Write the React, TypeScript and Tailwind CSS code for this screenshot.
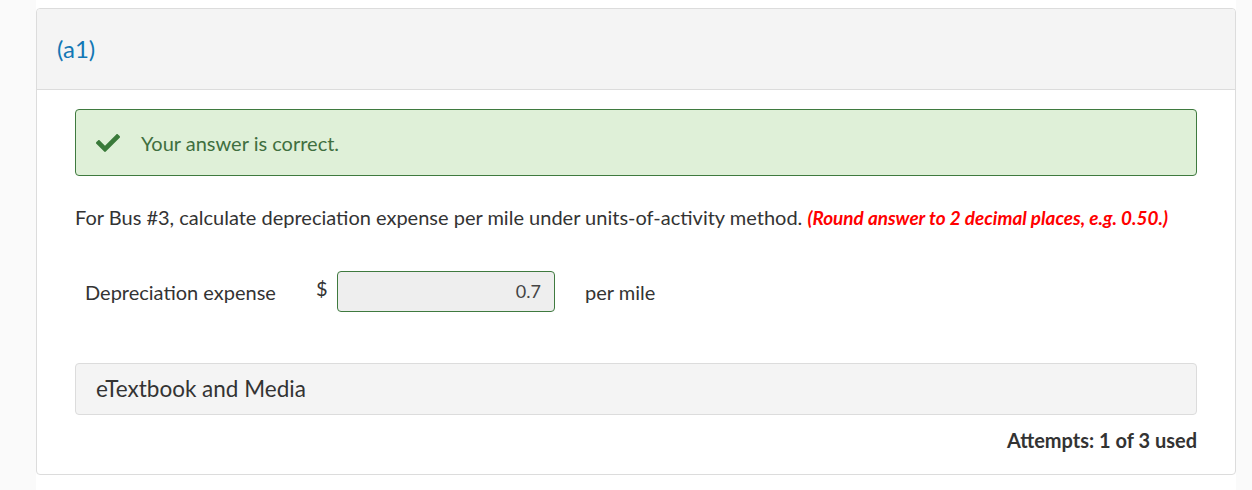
import React from "react";
import { FaCheck } from "react-icons/fa";

export default function App(): React.JSX.Element {
  return (
    <div className="min-h-[490px] bg-[#fafafa]" style={{ fontFamily: "Lato, 'Open Sans', sans-serif" }}>
      <div className="ml-[36px] w-[1200px] bg-white pt-2 pb-4">
        <div className="rounded border border-[#dcdcdc] bg-white">
          <div className="h-[81px] rounded-t border-b border-[#dcdcdc] bg-[#f4f4f4] px-5 pt-[24px]">
            <span className="text-[24px] leading-8 text-[#1277b5]">(a1)</span>
          </div>
          <div className="px-[38px] pt-[19px] pb-[20px]">
            <div className="flex h-[67px] items-center rounded border border-[#3f7a3f] bg-[#dff0d8] px-5">
              <FaCheck className="h-6 w-6 text-[#3a7a3a]" />
              <span className="ml-[21px] text-[20px] text-[#3f6f3f]">Your answer is correct.</span>
            </div>
            <p className="mt-[27px] text-[20px] leading-[28px] text-[#333]">
              For Bus #3, calculate depreciation expense per mile under units-of-activity method.{" "}
              <span className="text-[18.9px] font-bold italic text-[#f00]">(Round answer to 2 decimal places, e.g. 0.50.)</span>
            </p>
            <div className="mt-[39px] flex items-center pl-[10px]">
              <span className="w-[231px] text-[20px] text-[#333]">Depreciation expense</span>
              <span className="-mt-2 w-[21px] text-[20px] text-[#333]">$</span>
              <div className="flex h-[41px] w-[218px] items-center justify-end rounded-sm border border-[#3f7a3f] bg-[#eeeeee] px-[13px] text-[18px] text-[#444]">
                0.7
              </div>
              <span className="ml-[30px] text-[20px] text-[#333]">per mile</span>
            </div>
            <div className="mt-[51px] flex h-[52px] items-center rounded border border-[#dcdcdc] bg-[#f4f4f4] px-5 text-[22.5px] text-[#333]">
              eTextbook and Media
            </div>
            <div className="mt-[11px] text-right text-[20px] leading-[28px] font-bold text-[#333]">Attempts: 1 of 3 used</div>
          </div>
        </div>
      </div>
    </div>
  );
}
